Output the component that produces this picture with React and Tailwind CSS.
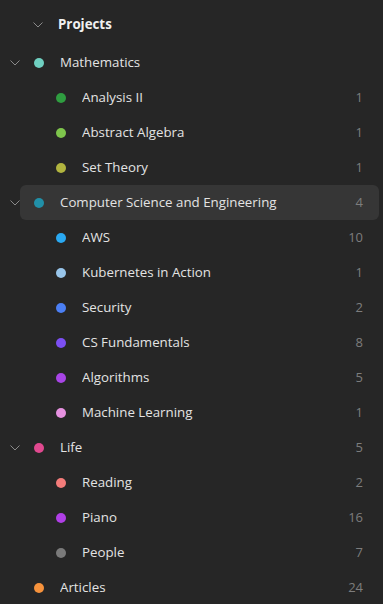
import React from "react";

const Chevron = ({ className = "" }) => (
  <svg width="10" height="6" viewBox="0 0 10 6" className={className} fill="none">
    <polyline points="0.5,0.5 5,5 9.5,0.5" stroke="#8a8a8a" strokeWidth="1" />
  </svg>
);

const tree = [
  {
    name: "Mathematics",
    color: "#6fd0c1",
    count: null,
    children: [
      { name: "Analysis II", color: "#2f9d40", count: 1 },
      { name: "Abstract Algebra", color: "#7ec54c", count: 1 },
      { name: "Set Theory", color: "#b1b43f", count: 1 },
    ],
  },
  {
    name: "Computer Science and Engineering",
    color: "#2190a8",
    count: 4,
    active: true,
    children: [
      { name: "AWS", color: "#2aa9f2", count: 10 },
      { name: "Kubernetes in Action", color: "#98c5ea", count: 1 },
      { name: "Security", color: "#4b7ff4", count: 2 },
      { name: "CS Fundamentals", color: "#7c4ff3", count: 8 },
      { name: "Algorithms", color: "#a845e6", count: 5 },
      { name: "Machine Learning", color: "#e691e0", count: 1 },
    ],
  },
  {
    name: "Life",
    color: "#e0498f",
    count: 5,
    children: [
      { name: "Reading", color: "#f47c7a", count: 2 },
      { name: "Piano", color: "#b03fe6", count: 16 },
      { name: "People", color: "#7a7a7a", count: 7 },
    ],
  },
  { name: "Articles", color: "#f6923c", count: 24, children: null },
];

function Row({ item, level }) {
  const hasChildren = item.children && item.children.length;
  return (
    <div className="flex h-[35px] items-center">
      <div className="flex w-[20px] shrink-0 items-center justify-start pl-[10px]">
        {level === 0 && hasChildren ? <Chevron /> : null}
      </div>
      <div
        className={`mr-[4px] flex h-[35px] flex-1 items-center rounded-[6px] pr-[16px] ${
          item.active ? "bg-[#363636]" : ""
        } ${level === 0 ? "pl-[14px]" : "pl-[36px]"}`}
      >
        <span
          className="h-[10px] w-[10px] shrink-0 rounded-full"
          style={{ backgroundColor: item.color }}
        />
        <span className="ml-[16px] flex-1 truncate text-[13.3px] text-[#e3e3e3]">{item.name}</span>
        {item.count != null && (
          <span className="text-[13px] text-[#7d7d7d]">{item.count}</span>
        )}
      </div>
    </div>
  );
}

export default function App() {
  return (
    <div
      className="h-[604px] w-[383px] overflow-hidden bg-[#262626]"
      style={{ fontFamily: '"Open Sans", "Noto Sans", sans-serif' }}
    >
      <div className="flex h-[45px] items-center pt-[5px]">
        <div className="w-[33px] shrink-0" />
        <Chevron />
        <span className="ml-[15px] text-[13.3px] font-bold text-[#f0f0f0]">Projects</span>
      </div>
      {tree.map((t) => (
        <React.Fragment key={t.name}>
          <Row item={t} level={0} />
          {t.children && t.children.map((c) => <Row key={c.name} item={c} level={1} />)}
        </React.Fragment>
      ))}
    </div>
  );
}
